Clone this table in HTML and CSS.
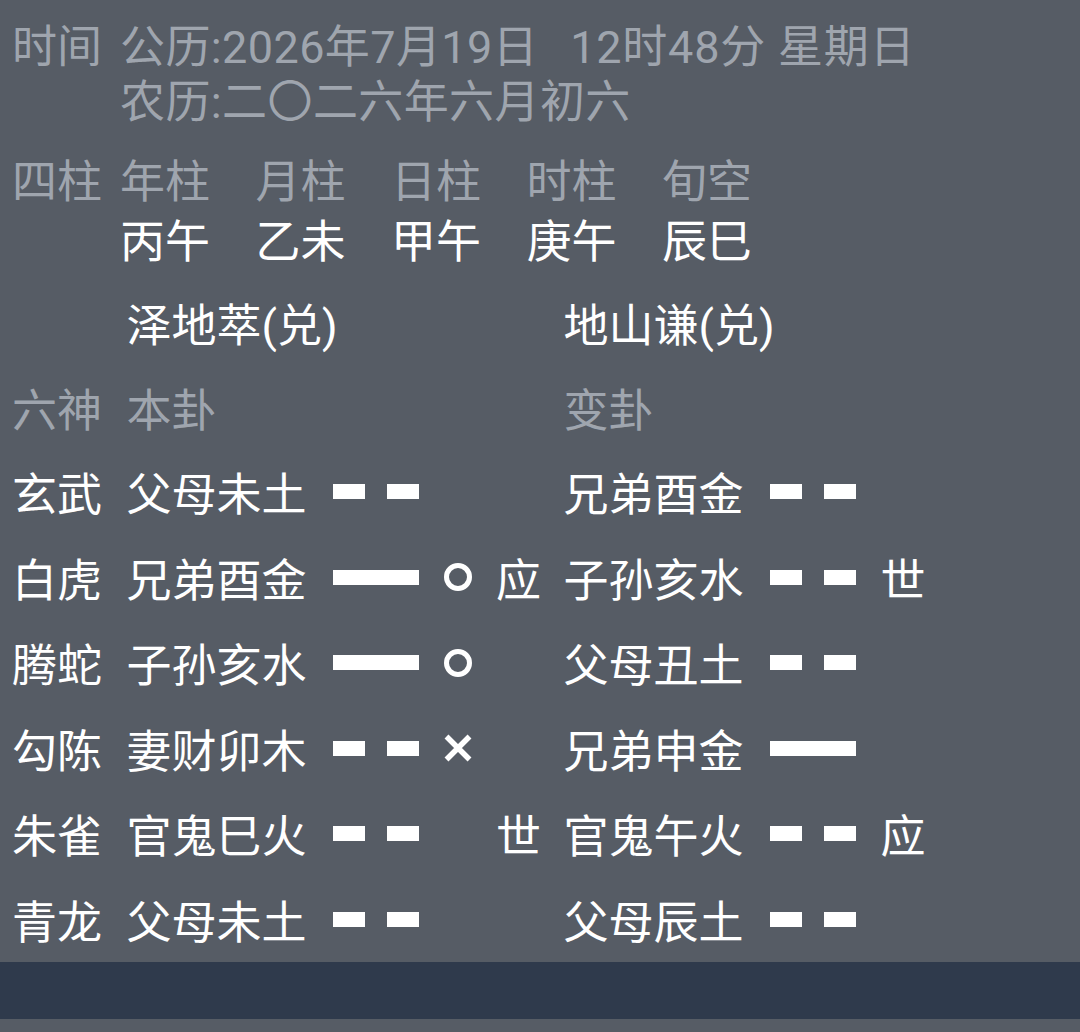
FILE: index.html
```html
<!DOCTYPE html>
<html lang="zh-CN">
<head>
<meta charset="utf-8">
<title>六爻排盘</title>
<link rel="stylesheet" href="styles.css">
</head>
<body>
<div class="page">
  <section class="time">
    <div class="time-row">
      <span class="tlabel">时间</span>
      <span class="tval">公历:2026年7月19日</span>
      <span class="tval tclock">12时48分 星期日</span>
    </div>
    <div class="time-row">
      <span class="tlabel"></span>
      <span class="tval">农历:二〇二六年六月初六</span>
    </div>
  </section>

  <section class="pillars">
    <span class="grey">四柱</span>
    <span class="grey">年柱</span>
    <span class="grey">月柱</span>
    <span class="grey">日柱</span>
    <span class="grey">时柱</span>
    <span class="grey">旬空</span>
    <span></span>
    <span class="white">丙午</span>
    <span class="white">乙未</span>
    <span class="white">甲午</span>
    <span class="white">庚午</span>
    <span class="white">辰巳</span>
  </section>

  <section class="gua">
    <div class="grow names">
      <span class="c-name white">泽地萃(兑)</span>
      <span class="c-rname white">地山谦(兑)</span>
    </div>
    <div class="grow heads">
      <span class="c-label grey">六神</span>
      <span class="c-name grey">本卦</span>
      <span class="c-rname grey">变卦</span>
    </div>

    <div class="grow yao">
      <span class="c-label">玄武</span>
      <span class="c-name">父母未土</span>
      <span class="c-line"><i class="yin"><b></b><b></b></i></span>
      <span class="c-mark"></span>
      <span class="c-sy"></span>
      <span class="c-rname">兄弟酉金</span>
      <span class="c-rline"><i class="yin"><b></b><b></b></i></span>
      <span class="c-rsy"></span>
    </div>
    <div class="grow yao">
      <span class="c-label">白虎</span>
      <span class="c-name">兄弟酉金</span>
      <span class="c-line"><i class="yang"></i></span>
      <span class="c-mark"><i class="circle"></i></span>
      <span class="c-sy">应</span>
      <span class="c-rname">子孙亥水</span>
      <span class="c-rline"><i class="yin"><b></b><b></b></i></span>
      <span class="c-rsy">世</span>
    </div>
    <div class="grow yao">
      <span class="c-label">腾蛇</span>
      <span class="c-name">子孙亥水</span>
      <span class="c-line"><i class="yang"></i></span>
      <span class="c-mark"><i class="circle"></i></span>
      <span class="c-sy"></span>
      <span class="c-rname">父母丑土</span>
      <span class="c-rline"><i class="yin"><b></b><b></b></i></span>
      <span class="c-rsy"></span>
    </div>
    <div class="grow yao">
      <span class="c-label">勾陈</span>
      <span class="c-name">妻财卯木</span>
      <span class="c-line"><i class="yin"><b></b><b></b></i></span>
      <span class="c-mark"><svg class="cross" viewBox="0 0 28 28" width="28" height="28"><path d="M2.5 2.5 L25.5 25.5 M25.5 2.5 L2.5 25.5" stroke="#fff" stroke-width="5.5" fill="none"/></svg></span>
      <span class="c-sy"></span>
      <span class="c-rname">兄弟申金</span>
      <span class="c-rline"><i class="yang"></i></span>
      <span class="c-rsy"></span>
    </div>
    <div class="grow yao">
      <span class="c-label">朱雀</span>
      <span class="c-name">官鬼巳火</span>
      <span class="c-line"><i class="yin"><b></b><b></b></i></span>
      <span class="c-mark"></span>
      <span class="c-sy">世</span>
      <span class="c-rname">官鬼午火</span>
      <span class="c-rline"><i class="yin"><b></b><b></b></i></span>
      <span class="c-rsy">应</span>
    </div>
    <div class="grow yao">
      <span class="c-label">青龙</span>
      <span class="c-name">父母未土</span>
      <span class="c-line"><i class="yin"><b></b><b></b></i></span>
      <span class="c-mark"></span>
      <span class="c-sy"></span>
      <span class="c-rname">父母辰土</span>
      <span class="c-rline"><i class="yin"><b></b><b></b></i></span>
      <span class="c-rsy"></span>
    </div>
  </section>

  <div class="band"></div>
</div>
</body>
</html>
```

FILE: styles.css
```css
html, body {
  margin: 0;
  padding: 0;
  background: #565c65;
}

.page {
  width: 1080px;
  height: 1032px;
  overflow: hidden;
  background: #565c65;
  font-family: Roboto, "Noto Sans CJK SC", sans-serif;
  font-size: 45px;
  color: #ffffff;
}

.grey { color: #9fa5ae; }
.white { color: #ffffff; }

/* time block */
.time {
  padding: 20px 0 0 12px;
  color: #9fa5ae;
}
.time-row {
  display: flex;
  height: 55px;
  line-height: 55px;
}
.tlabel {
  width: 108px;
  flex: none;
  white-space: nowrap;
}
.tval {
  white-space: pre;
  letter-spacing: 0.4px;
}
.tclock {
  margin-left: 32px;
  letter-spacing: 0.8px;
}

/* four pillars */
.pillars {
  margin-top: 23px;
  padding-left: 12px;
  display: grid;
  grid-template-columns: 108px repeat(5, 135.5px);
  grid-auto-rows: 60px;
  line-height: 60px;
  white-space: nowrap;
}

/* hexagram grid */
.gua {
  margin-top: 7px;
  padding-left: 12px;
}
.grow {
  display: grid;
  grid-template-columns: 90px 182px 86px 28px 43px 182px 86px 46px;
  column-gap: 24.5px;
  align-items: center;
  white-space: nowrap;
}
.names { height: 85px; }
.heads { height: 84px; }
.yao { height: 85.5px; }

.c-label { grid-column: 1; }
.c-name { grid-column: 2; }
.c-line { grid-column: 3; display: flex; align-items: center; }
.c-mark { grid-column: 4; display: flex; align-items: center; justify-content: center; }
.c-sy { grid-column: 5; }
.c-rname { grid-column: 6; }
.c-rline { grid-column: 7; display: flex; align-items: center; }
.c-rsy { grid-column: 8; }

.names .c-name,
.names .c-rname { grid-column-end: span 3; }

.yang {
  display: block;
  width: 86px;
  height: 15px;
  background: #ffffff;
}
.yin {
  display: flex;
  width: 86px;
  height: 15px;
  justify-content: space-between;
}
.yin b {
  display: block;
  width: 32px;
  height: 15px;
  background: #ffffff;
}
.circle {
  display: block;
  width: 18px;
  height: 18px;
  border: 5px solid #ffffff;
  border-radius: 50%;
}
.cross { display: block; }

.band {
  height: 57px;
  background: #2f3a4c;
}
```
